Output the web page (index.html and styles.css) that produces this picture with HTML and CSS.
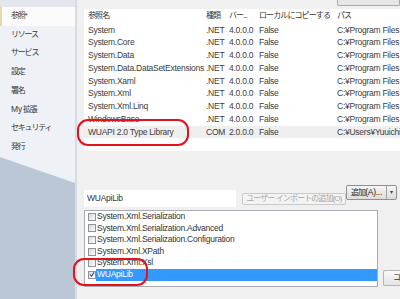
FILE: index.html
```html
<!DOCTYPE html>
<html lang="ja">
<head>
<meta charset="utf-8">
<link rel="stylesheet" href="styles.css">
</head>
<body>
<div class="window">
  <aside class="sidebar">
    <div class="tabs">
      <div class="tab tab-prev"></div>
      <div class="tab active">参照*</div>
      <div class="tab">リソース</div>
      <div class="tab">サービス</div>
      <div class="tab">設定</div>
      <div class="tab">署名</div>
      <div class="tab"><span class="lat">My</span> 拡張</div>
      <div class="tab">セキュリティ</div>
      <div class="tab">発行</div>
    </div>
  </aside>
  <main class="content">
    <div class="topbar"><div class="top-btn"></div></div>
    <div class="grid">
      <div class="row head"><span class="ja">参照名</span><span class="ja">種類</span><span class="ja">バー...</span><span class="ja">ローカルにコピーする</span><span class="ja">パス</span></div>
      <div class="row"><span>System</span><span>.NET</span><span>4.0.0.0</span><span>False</span><span>C:¥Program Files (x86)¥Reference Assemblies</span></div>
      <div class="row"><span>System.Core</span><span>.NET</span><span>4.0.0.0</span><span>False</span><span>C:¥Program Files (x86)¥Reference Assemblies</span></div>
      <div class="row"><span>System.Data</span><span>.NET</span><span>4.0.0.0</span><span>False</span><span>C:¥Program Files (x86)¥Reference Assemblies</span></div>
      <div class="row"><span>System.Data.DataSetExtensions</span><span>.NET</span><span>4.0.0.0</span><span>False</span><span>C:¥Program Files (x86)¥Reference Assemblies</span></div>
      <div class="row"><span>System.Xaml</span><span>.NET</span><span>4.0.0.0</span><span>False</span><span>C:¥Program Files (x86)¥Reference Assemblies</span></div>
      <div class="row"><span>System.Xml</span><span>.NET</span><span>4.0.0.0</span><span>False</span><span>C:¥Program Files (x86)¥Reference Assemblies</span></div>
      <div class="row"><span>System.Xml.Linq</span><span>.NET</span><span>4.0.0.0</span><span>False</span><span>C:¥Program Files (x86)¥Reference Assemblies</span></div>
      <div class="row"><span>WindowsBase</span><span>.NET</span><span>4.0.0.0</span><span>False</span><span>C:¥Program Files (x86)¥Reference Assemblies</span></div>
      <div class="row sel"><span>WUAPI 2.0 Type Library</span><span>COM</span><span>2.0.0.0</span><span>False</span><span>C:¥Users¥Yuuichi¥Documents</span></div>
    </div>
    <div class="actions">
      <div class="textbox">WUApiLib</div>
      <div class="btn disabled ja">ユーザー インポートの追加(O)</div>
      <div class="split-btn"><span class="split-main"><span class="ja">追加</span>(A)...</span><span class="split-drop">▾</span></div>
    </div>
    <div class="imports">
      <div class="listbox">
        <div class="item"><span class="cb"></span><span class="label">System.Xml.Serialization</span></div>
        <div class="item"><span class="cb"></span><span class="label">System.Xml.Serialization.Advanced</span></div>
        <div class="item"><span class="cb"></span><span class="label">System.Xml.Serialization.Configuration</span></div>
        <div class="item"><span class="cb"></span><span class="label">System.Xml.XPath</span></div>
        <div class="item"><span class="cb"></span><span class="label">System.Xml.Xsl</span></div>
        <div class="item selected"><span class="cb checked"><svg width="7" height="7" viewBox="0 0 7 7"><path d="M1 3.5 L2.8 5.5 L6 1" fill="none" stroke="#2a4a8a" stroke-width="1.3"/></svg></span><span class="label">WUApiLib</span></div>
      </div>
      <div class="btn side ja">コ</div>
    </div>
  </main>
  <div class="mark mark-ref"></div>
  <div class="mark mark-imp"></div>
</div>
</body>
</html>
```

FILE: styles.css
```css
* { box-sizing: border-box; }
html, body { margin: 0; padding: 0; }
body {
  width: 400px;
  height: 299px;
  overflow: hidden;
  font-family: "Liberation Sans", "Noto Sans CJK JP", sans-serif;
  font-size: 8.5px;
  letter-spacing: -0.25px;
  color: #333;
}
.window {
  position: relative;
  display: flex;
  height: 299px;
  background: #f0f0f0;
}
.sidebar {
  flex: none;
  width: 77px;
  background: #bcc7d5;
  border-right: 2px solid #d6dce5;
}
.tabs {
  height: 183px;
  background: #eef1f5;
  clip-path: polygon(0 0, 100% 0, 100% 100%, 0 157px);
}
.tab {
  height: 18.7px;
  line-height: 18.7px;
  padding-left: 11px;
  font-size: 8px;
  letter-spacing: -1.2px;
  color: #3a3a3a;
  white-space: nowrap;
}
.tab .lat { letter-spacing: -0.2px; font-size: 8.5px; }
.tab-prev {
  height: 7px;
  background: #e3e7ed;
}
.tab.active {
  background: #fbfbfb;
  box-shadow: inset 2px 0 #e9d7a4;
}
.ja { font-size: 8px; letter-spacing: -0.9px; }

.content {
  flex: 1;
  min-width: 0;
  display: flex;
  flex-direction: column;
  padding-left: 7px;
  overflow: hidden;
}
.topbar {
  height: 9px;
  display: flex;
  justify-content: flex-end;
}
.top-btn {
  width: 63px;
  height: 6px;
  border: 1px solid #a8a8a8;
  border-top: none;
  border-radius: 0 0 2px 2px;
  background: #e6e6e6;
}
.grid {
  height: 142px;
  background: #fff;
  overflow: hidden;
}
.row {
  display: grid;
  grid-template-columns: 118px 23px 30px 78px 1fr;
  padding-left: 4px;
  height: 12.75px;
  line-height: 12.75px;
  white-space: nowrap;
  color: #3c3c3c;
}
.row span { overflow: hidden; }
.row.head {
  height: 14.6px;
  line-height: 13px;
  color: #333;
}
.row.sel { background: #efefef; }

.actions {
  margin-top: 33px;
  height: 25px;
  display: flex;
  align-items: flex-start;
}
.textbox {
  margin-top: 6px;
  width: 170px;
  height: 17px;
  line-height: 17px;
  padding-left: 3px;
  background: #fff;
  color: #333;
}
.btn {
  border: 1px solid #b5b5b5;
  border-radius: 2px;
  background: linear-gradient(#fafafa, #e4e4e4);
  text-align: center;
  white-space: nowrap;
}
.btn.disabled {
  margin-left: 6px;
  margin-top: 9px;
  width: 117px;
  height: 12px;
  line-height: 10px;
  color: #a8a8a8;
  border-color: #cacaca;
  background: #f3f3f3;
}
.split-btn {
  margin-left: auto;
  margin-right: 3px;
  margin-top: 1px;
  height: 15px;
  display: flex;
  border: 1px solid #8e8f8f;
  border-radius: 2px;
  background: linear-gradient(#f6f6f6, #dcdcdc);
  color: #222;
  line-height: 13px;
}
.split-main {
  width: 40px;
  text-align: center;
  border-right: 1px solid #a0a0a0;
}
.split-drop {
  width: 9px;
  text-align: center;
  font-size: 6px;
  color: #444;
}

.imports {
  margin-top: 1px;
  display: flex;
  align-items: flex-end;
}
.listbox {
  flex: none;
  width: 294px;
  height: 77px;
  border: 1px solid #a9acb2;
  background: #fff;
  overflow: hidden;
}
.item {
  height: 11.6px;
  display: flex;
  align-items: center;
  white-space: nowrap;
  color: #333;
}
.cb {
  flex: none;
  width: 8px;
  height: 8px;
  margin-left: 3px;
  border: 1px solid #8f9296;
  background: linear-gradient(135deg, #dcdcdc, #fbfbfb);
  display: flex;
  align-items: center;
  justify-content: center;
}
.label {
  flex: 1;
  height: 100%;
  line-height: 11.6px;
  padding-left: 1px;
}
.item.selected .label {
  background: #3399ff;
  color: #fff;
}
.btn.side {
  margin-left: 5px;
  margin-bottom: 1px;
  flex: 1;
  height: 16px;
  line-height: 14px;
  text-align: left;
  padding-left: 9px;
  border-right: none;
  border-radius: 2px 0 0 2px;
}

.mark {
  position: absolute;
  border: 2px solid #e5121c;
  border-radius: 11px;
}
.mark-ref { left: 77px; top: 119px; width: 112px; height: 27px; }
.mark-imp { left: 73px; top: 258px; width: 75px; height: 28px; }
```
